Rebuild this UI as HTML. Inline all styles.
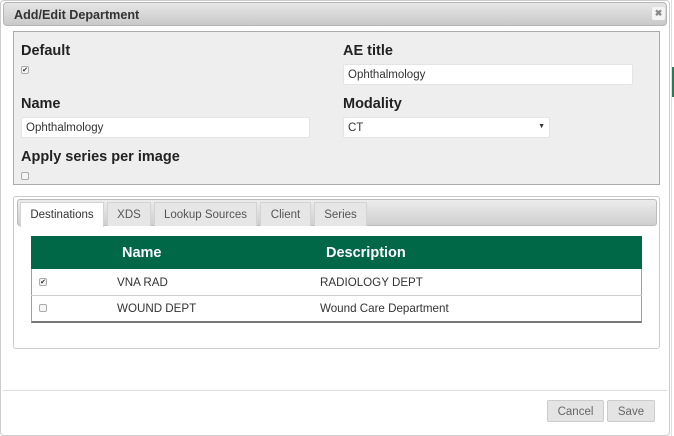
<!DOCTYPE html>
<html><head><style>
*{box-sizing:border-box}
body{margin:0;width:674px;height:436px;background:#fff;font-family:"Liberation Sans",sans-serif;position:relative;overflow:hidden}
.abs{position:absolute}
.dlg{left:0;top:0;width:670px;height:436px;background:#fff;border:1px solid #ccc;border-radius:4px}
.title{left:3px;top:2px;width:664px;height:24px;background:linear-gradient(#e6e6e6,#c9c9c9);border:1px solid #b5b5b5;border-radius:4px;font-weight:bold;font-size:12.6px;color:#333;padding:5px 0 0 10px}
.x{left:652px;top:7px;width:13px;height:13px;background:#f4f4f4;border-radius:2px;font-size:9px;color:#888;text-align:center;line-height:13px;font-weight:bold}
.form{left:13px;top:31px;width:647px;height:154px;background:#eee;border:1px solid #aaa}
.lbl{font-weight:bold;font-size:14.5px;color:#222}
.inp{background:#fff;border:1px solid #e4e4e4;border-radius:2px;font-size:11.5px;color:#333;padding:4px 0 0 4px;height:21px}
.cb{width:8px;height:8px;border:1px solid #aaa;border-radius:2px;background:#f5f5f5;font-size:7px;line-height:7px;text-align:center;color:#333}
.tp{left:13px;top:196px;width:647px;height:153px;border:1px solid #ccc;border-radius:3px}
.tb{left:17px;top:199px;width:640px;height:27px;background:linear-gradient(#ececec,#cfcfcf);border:1px solid #bbb;border-radius:3px}
.tab{top:202px;height:24px;background:#e6e6e6;border:1px solid #d3d3d3;border-bottom:none;font-size:11.5px;color:#555;text-align:center;padding-top:6px}
.tbl{left:31px;top:236px;width:611px;height:87px;border:1px solid #8aa;border-bottom:2px solid #777}
.hd{left:31px;top:236px;width:611px;height:33px;background:#006747;color:#fff;font-weight:bold;font-size:14.5px}
.row{font-size:11.6px;color:#333}
.btn{top:400px;height:22px;background:#e4e4e4;border:1px solid #ccc;border-radius:2px;font-size:11.5px;color:#666;text-align:center;padding-top:5px}
</style></head><body>
<div class="abs" style="left:671px;top:0;width:1px;height:436px;background:#ddd"></div>
<div class="abs" style="left:672px;top:67px;width:2px;height:30px;background:#2a7a5a"></div>
<div class="abs dlg"></div>
<div class="abs title">Add/Edit Department</div>
<div class="abs x">✖</div>
<div class="abs form"></div>
<div class="abs lbl" style="left:21px;top:43px">Default</div>
<div class="abs cb" style="left:21px;top:66px">✔</div>
<div class="abs lbl" style="left:343px;top:43px">AE title</div>
<div class="abs inp" style="left:343px;top:64px;width:290px">Ophthalmology</div>
<div class="abs lbl" style="left:21px;top:96px">Name</div>
<div class="abs inp" style="left:21px;top:117px;width:289px">Ophthalmology</div>
<div class="abs lbl" style="left:343px;top:96px">Modality</div>
<div class="abs inp" style="left:343px;top:117px;width:207px">CT<span style="position:absolute;right:4px;top:5px;font-size:7px">▼</span></div>
<div class="abs lbl" style="left:21px;top:149px">Apply series per image</div>
<div class="abs cb" style="left:21px;top:172px"></div>
<div class="abs tp"></div>
<div class="abs tb"></div>
<div class="abs tab" style="left:20px;width:84px;background:#fff;height:25px;color:#333">Destinations</div>
<div class="abs tab" style="left:107px;width:44px">XDS</div>
<div class="abs tab" style="left:154px;width:103px">Lookup Sources</div>
<div class="abs tab" style="left:260px;width:51px">Client</div>
<div class="abs tab" style="left:314px;width:53px">Series</div>
<div class="abs tbl"></div>
<div class="abs hd"><span class="abs" style="left:91px;top:9px">Name</span><span class="abs" style="left:295px;top:9px">Description</span></div>
<div class="abs" style="left:31px;top:295px;width:611px;height:1px;background:#ccc"></div>
<div class="abs cb" style="left:39px;top:278px">✔</div>
<div class="abs row" style="left:117px;top:276px">VNA RAD</div>
<div class="abs row" style="left:320px;top:276px">RADIOLOGY DEPT</div>
<div class="abs cb" style="left:39px;top:304px"></div>
<div class="abs row" style="left:117px;top:302px">WOUND DEPT</div>
<div class="abs row" style="left:320px;top:302px">Wound Care Department</div>
<div class="abs" style="left:3px;top:390px;width:664px;height:1px;background:#ddd"></div>
<div class="abs btn" style="left:547px;width:57px">Cancel</div>
<div class="abs btn" style="left:607px;width:48px">Save</div>
</body></html>
